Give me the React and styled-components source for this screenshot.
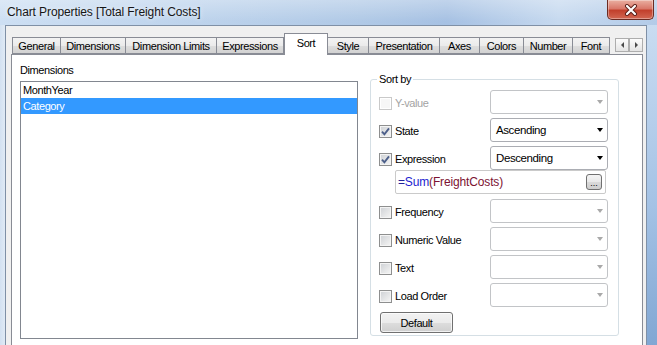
import React from "react";
import styled, { createGlobalStyle } from "styled-components";

const GlobalStyle = createGlobalStyle`
  html, body {
    margin: 0;
    padding: 0;
    overflow: hidden;
    background: #b9cfea;
  }
  * { box-sizing: border-box; }
`;

const uiFont = `"Liberation Sans", Arial, sans-serif`;

const Window = styled.div`
  width: 657px;
  height: 345px;
  display: flex;
  flex-direction: column;
  overflow: hidden;
  font-family: ${uiFont};
  font-size: 11px;
  letter-spacing: -0.4px;
  color: #000;
  background: linear-gradient(90deg, #cddff3 0%, #bdd3ec 30%, #b0c9e6 55%, #a6c1e3 68%, #c6d9ef 85%, #b3cbe8 100%);
`;

const TitleBar = styled.div`
  height: 25px;
  flex: none;
  display: flex;
  justify-content: space-between;
  align-items: flex-start;
  background: linear-gradient(180deg, rgba(255, 255, 255, 0.3), rgba(255, 255, 255, 0) 85%);
`;

const Title = styled.div`
  padding: 5px 0 0 7px;
  font-size: 12px;
  letter-spacing: -0.1px;
  color: #161616;
  text-shadow: 0 0 5px rgba(255, 255, 255, 0.9);
`;

const CloseButton = styled.div`
  width: 47px;
  height: 20px;
  margin-right: 3px;
  border: 1px solid #6b2b22;
  border-top: none;
  border-radius: 0 0 5px 5px;
  display: flex;
  align-items: center;
  justify-content: center;
  background: linear-gradient(180deg, #eab0a2 0%, #d9786a 45%, #c2402c 55%, #d26752 100%);
  box-shadow: inset 0 0 0 1px rgba(255, 255, 255, 0.35);
`;

const FrameBody = styled.div`
  flex: 1;
  display: flex;
  padding: 0 10px 0 5px;
  background:
    linear-gradient(90deg, #d3e1f1 0, #e0eaf5 5px, transparent 5px),
    linear-gradient(180deg, #c9dcf1 0%, #a4c2e5 55%, #7fa5d2 100%);
`;

const Dialog = styled.div`
  flex: 1;
  display: flex;
  flex-direction: column;
  background: #f0f0f0;
  border: 1px solid #7f90a6;
  border-bottom: none;
  padding: 0 3px 0 5px;
`;

const TabStrip = styled.div`
  height: 28px;
  flex: none;
  display: flex;
  align-items: flex-end;
  padding-left: 1px;
`;

const Tab = styled.div`
  width: ${(p) => p.$w}px;
  height: ${(p) => (p.$active ? 22 : 17)}px;
  margin-bottom: ${(p) => (p.$active ? -1 : 0)}px;
  position: relative;
  z-index: ${(p) => (p.$active ? 1 : 0)};
  border: 1px solid #898c95;
  border-bottom: ${(p) => (p.$active ? "none" : "1px solid #898c95")};
  border-left-width: ${(p) => (p.$first || p.$active ? 1 : 0)}px;
  display: flex;
  align-items: center;
  justify-content: center;
  padding-bottom: ${(p) => (p.$active ? 3 : 0)}px;
  background: ${(p) =>
    p.$active
      ? "#fff"
      : "linear-gradient(180deg, #f3f3f3 0%, #ebebeb 50%, #dedede 51%, #d2d2d2 100%)"};
  white-space: nowrap;
`;

const ScrollArrows = styled.div`
  margin-left: auto;
  margin-bottom: 2px;
  display: flex;
`;

const ArrowButton = styled.div`
  width: 14px;
  height: 14px;
  border: 1px solid #adadad;
  background: linear-gradient(180deg, #fcfcfc, #e4e4e4);
  display: flex;
  align-items: center;
  justify-content: center;
  &::after {
    content: "";
    border-top: 3px solid transparent;
    border-bottom: 3px solid transparent;
    border-${(p) => (p.$dir === "left" ? "right" : "left")}: 3px solid #4a4a4a;
  }
`;

const Panel = styled.div`
  height: 300px;
  flex: none;
  display: flex;
  align-items: flex-start;
  background: #fff;
  border: 1px solid #898c95;
`;

const LeftColumn = styled.div`
  width: 338px;
  margin-left: 8px;
  display: flex;
  flex-direction: column;
`;

const FieldLabel = styled.div`
  margin-top: 9px;
  line-height: 13px;
`;

const ListBox = styled.div`
  margin-top: 4px;
  height: 258px;
  border: 1px solid #828790;
  background: #fff;
`;

const ListItem = styled.div`
  height: 16px;
  line-height: 16px;
  padding-left: 2px;
  background: ${(p) => (p.$selected ? "#3399ff" : "transparent")};
  color: ${(p) => (p.$selected ? "#fff" : "#000")};
`;

const SortGroup = styled.fieldset`
  width: 249px;
  margin: 18px 0 0 12px;
  padding: 4px 0 2px 8px;
  border: 1px solid #d5dfe5;
  border-radius: 3px;
  display: flex;
  flex-direction: column;
  gap: 4px;
`;

const Legend = styled.legend`
  padding: 0 2px;
  margin-left: -2px;
  line-height: 13px;
`;

const Row = styled.div`
  height: 24px;
  display: flex;
  align-items: center;
`;

const CheckLabel = styled.label`
  width: 111px;
  display: flex;
  align-items: center;
  padding-top: 2px;
  color: ${(p) => (p.$disabled ? "#a3a3a3" : "#000")};
`;

const Box = styled.span`
  width: 13px;
  height: 13px;
  margin-right: 3px;
  flex: none;
  display: flex;
  align-items: center;
  justify-content: center;
  border: 1px solid ${(p) => (p.$disabled ? "#c9c9c9" : "#8e8f8f")};
  background: ${(p) =>
    p.$disabled ? "#f7f7f7" : "linear-gradient(135deg, #cdd0d4 0%, #e6e7e8 60%, #f6f6f6 100%)"};
  box-shadow: inset 0 0 0 1px ${(p) => (p.$disabled ? "#fff" : "#f4f4f4")};
`;

const Combo = styled.div`
  width: 118px;
  height: 24px;
  border: 1px solid ${(p) => (p.$disabled ? "#c2c4c7" : "#abadb3")};
  border-radius: 3px;
  background: #fff;
  display: flex;
  align-items: center;
  justify-content: space-between;
  padding: 0 4px 0 5px;
  &::after {
    content: "";
    border-left: 3.5px solid transparent;
    border-right: 3.5px solid transparent;
    border-top: 4px solid ${(p) => (p.$disabled ? "#a9a9a9" : "#000")};
  }
`;

const ComboText = styled.span`
  font-size: 11.5px;
`;

const ExpressionBox = styled.div`
  width: 211px;
  height: 24px;
  margin: -4px 0 1px 16px;
  border: 1px solid #cacaca;
  border-radius: 2px;
  background: #fff;
  display: flex;
  align-items: center;
  justify-content: space-between;
  padding: 0 3px 0 2px;
  font-size: 12px;
  letter-spacing: -0.15px;
`;

const Token = styled.span`
  color: ${(p) => p.$color};
`;

const EllipsisButton = styled.div`
  width: 16px;
  height: 16px;
  border: 1px solid #707070;
  border-radius: 3px;
  background: linear-gradient(180deg, #f4f4f4 0%, #e8e8e8 50%, #d9d9d9 51%, #cdcdcd 100%);
  display: flex;
  align-items: flex-end;
  justify-content: center;
  font-size: 9px;
  line-height: 11px;
  letter-spacing: 0;
`;

const PushButton = styled.div`
  width: 73px;
  height: 21px;
  margin: 1px 0 0 1px;
  border: 1px solid #707070;
  border-radius: 3px;
  background: linear-gradient(180deg, #f2f2f2 0%, #ebebeb 50%, #dddddd 51%, #cfcfcf 100%);
  box-shadow: inset 0 0 0 1px rgba(255, 255, 255, 0.7);
  display: flex;
  align-items: center;
  justify-content: center;
`;

const tabs = [
  ["General", 49],
  ["Dimensions", 65],
  ["Dimension Limits", 91],
  ["Expressions", 67],
  ["Sort", 44],
  ["Style", 41],
  ["Presentation", 71],
  ["Axes", 40],
  ["Colors", 44],
  ["Number", 49],
  ["Font", 37],
];

const sortRows = [
  { label: "Y-value", disabled: true, checked: false, value: "" },
  { label: "State", checked: true, value: "Ascending" },
  { label: "Expression", checked: true, value: "Descending", expression: true },
  { label: "Frequency", checked: false, value: "" },
  { label: "Numeric Value", checked: false, value: "" },
  { label: "Text", checked: false, value: "" },
  { label: "Load Order", checked: false, value: "" },
];

function CheckBox({ checked, disabled }) {
  return (
    <Box $disabled={disabled}>
      {checked && (
        <svg width="11" height="11" viewBox="0 0 11 11">
          <path d="M2 5.6 L4.4 8.3 L9 2.4" fill="none" stroke="#4c5f8a" strokeWidth="1.9" />
        </svg>
      )}
    </Box>
  );
}

function SortRow({ row }) {
  const comboDisabled = !row.checked;
  return (
    <Row>
      <CheckLabel $disabled={row.disabled}>
        <CheckBox checked={row.checked} disabled={row.disabled} />
        {row.label}
      </CheckLabel>
      <Combo $disabled={comboDisabled}>
        <ComboText>{row.value}</ComboText>
      </Combo>
    </Row>
  );
}

export default function App() {
  return (
    <Window>
      <GlobalStyle />
      <TitleBar>
        <Title>Chart Properties [Total Freight Costs]</Title>
        <CloseButton>
          <svg width="14" height="12" viewBox="0 0 14 12">
            <path d="M3 2 L11 10 M11 2 L3 10" stroke="#5a1d16" strokeWidth="4" strokeLinecap="round" />
            <path d="M3 2 L11 10 M11 2 L3 10" stroke="#fff" strokeWidth="2.2" strokeLinecap="round" />
          </svg>
        </CloseButton>
      </TitleBar>
      <FrameBody>
        <Dialog>
          <TabStrip>
            {tabs.map(([name, w], i) => (
              <Tab key={name} $w={w} $first={i === 0} $active={name === "Sort"}>
                {name}
              </Tab>
            ))}
            <ScrollArrows>
              <ArrowButton $dir="left" />
              <ArrowButton $dir="right" />
            </ScrollArrows>
          </TabStrip>
          <Panel>
            <LeftColumn>
              <FieldLabel>Dimensions</FieldLabel>
              <ListBox>
                <ListItem>MonthYear</ListItem>
                <ListItem $selected>Category</ListItem>
              </ListBox>
            </LeftColumn>
            <SortGroup>
              <Legend>Sort by</Legend>
              {sortRows.map((row) => (
                <React.Fragment key={row.label}>
                  <SortRow row={row} />
                  {row.expression && (
                    <ExpressionBox>
                      <span>
                        <Token $color="#22229a">=</Token>
                        <Token $color="#1c1cd0">Sum</Token>
                        <Token $color="#7c1232">(FreightCosts)</Token>
                      </span>
                      <EllipsisButton>...</EllipsisButton>
                    </ExpressionBox>
                  )}
                </React.Fragment>
              ))}
              <PushButton>Default</PushButton>
            </SortGroup>
          </Panel>
        </Dialog>
      </FrameBody>
    </Window>
  );
}
